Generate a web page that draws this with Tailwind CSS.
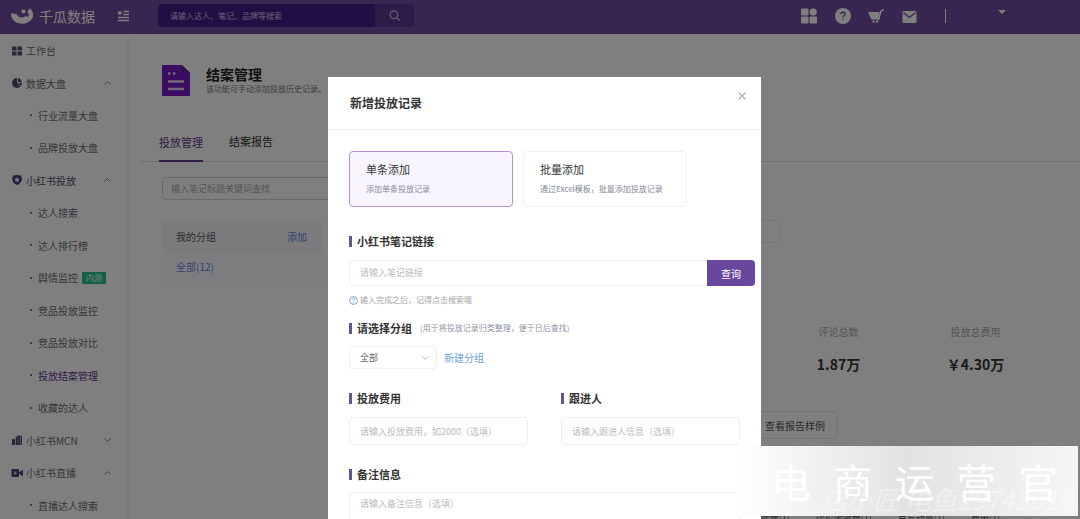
<!DOCTYPE html>
<html lang="zh-CN">
<head>
<meta charset="utf-8">
<title>千瓜数据 - 结案管理</title>
<script src="https://cdn.jsdelivr.net/npm/@tailwindcss/browser@4"></script>
</head>
<body class="bg-white font-['Noto_Sans_CJK_SC',sans-serif] text-[#333]">
<div class="flex h-screen flex-col overflow-hidden">
  <header class="flex h-[34px] shrink-0 items-center bg-[#704aa0] pb-[3px] pl-[11px] text-white">
    <svg class="h-[22px] w-[22px] shrink-0" viewBox="0 0 22 22"><path d="M2 9.500C4 17 14 19.500 19.500 12C20.500 10 20 7 17.500 5" fill="none" stroke="currentColor" stroke-width="4.500"/><path d="M0 8L5.500 9C7 12.500 11 13.500 15 11L19 14C14 20 3 20 0 8Z" fill="currentColor"/><circle cx="12.500" cy="6.500" r="2" fill="currentColor"/></svg>
    <span class="ml-1.5 w-[70px] text-sm leading-5">千瓜数据</span>
    <button aria-label="收起菜单" class="ml-2"><svg class="h-3 w-3" viewBox="0 0 12 12" fill="none" stroke="currentColor" stroke-width="1.300"><path d="M6.500 1.500H12M6.500 4.500H12M1 7.500H12M1 10.500H12"/><path d="M1 3H4.500" stroke-width="3"/></svg></button>
    <form class="ml-[29px] flex h-[23px] w-[256px] overflow-hidden rounded-sm">
      <input aria-label="搜索" class="min-w-0 flex-1 bg-[#441c8a] pl-3 text-[8px] placeholder:text-[#cfc4e4]" placeholder="请输入达人、笔记、品牌等搜索">
      <button type="button" aria-label="搜索" class="flex w-[39px] items-center justify-center bg-[#5a3890]"><svg class="h-[11px] w-[11px]" viewBox="0 0 12 12" fill="none" stroke="#cdbfe0" stroke-width="1.400"><circle cx="5.300" cy="5.300" r="4.200"/><path d="M8.500 8.500L11.500 11.500"/></svg></button>
    </form>
    <nav class="ml-auto flex items-center pr-[74px]">
      <a href="#" aria-label="应用"><svg class="h-4 w-4" viewBox="0 0 16 16" fill="currentColor"><rect x="0" y="0.500" width="7.500" height="7" rx="1"/><circle cx="12.200" cy="4" r="3.600"/><rect x="0" y="8.500" width="7.500" height="7" rx="1"/><rect x="8.500" y="8.500" width="7.500" height="7" rx="1"/></svg></a>
      <a href="#" aria-label="帮助" class="ml-[18px]"><svg class="h-4 w-4" viewBox="0 0 16 16"><circle cx="8" cy="8" r="8" fill="currentColor"/><path d="M5.800 6.200C5.800 3.500 10.300 3.700 10.300 6 10.300 7.500 8 7.700 8 9.200M8 10.500V12" fill="none" stroke="#704aa0" stroke-width="1.300"/></svg></a>
      <a href="#" aria-label="购物车" class="ml-[17px]"><svg class="h-4 w-4" viewBox="0 0 16 16" fill="currentColor"><path d="M0 4H11.500L10.200 11.500H3.200Z"/><path d="M10.500 12L13 3L15.800 1.300" fill="none" stroke="currentColor" stroke-width="1.500"/><circle cx="5.500" cy="13.500" r="1.200"/><circle cx="9" cy="13.500" r="1.200"/></svg></a>
      <a href="#" aria-label="消息" class="ml-[18px]"><svg class="h-4 w-[15px]" viewBox="0 0 15 16"><rect x=".5" y="3" width="14" height="12" rx="1" fill="currentColor"/><path d="M1.500 4.500L7.500 9.500L13.500 4.500" fill="none" stroke="#704aa0" stroke-width="1.300"/></svg></a>
      <span class="ml-7 h-3.5 w-px bg-white"></span>
      <button aria-label="账户菜单" class="mb-2 ml-[52px]"><svg class="h-1 w-2" viewBox="0 0 8 4"><path d="M0 0H8L4 4Z" fill="currentColor"/></svg></button>
    </nav>
  </header>
  <div class="flex min-h-0 flex-1">
    <aside class="w-[128px] shrink-0 overflow-hidden border-r border-[#f2f2f6] text-[10px] text-[#6c6c74] shadow-sm">
      <a href="#" class="flex h-[33px] items-center pl-3"><svg class="mr-1 h-2.5 w-2.5" viewBox="0 0 10 10" fill="#53536b"><path d="M0 .5H4.500V4.500H0ZM5.500 .5H10V4.500H5.500ZM0 5.500H4.500V9.500H0ZM5.500 5.500H10V9.500H5.500Z"/></svg>工作台</a>
      <button class="flex h-8 w-full items-center pr-4 pl-3"><svg class="mr-1 h-2.5 w-2.5" viewBox="0 0 10 10"><circle cx="5" cy="5" r="5" fill="#53536b"/><path d="M5.500 0V4.500H10M5.500 4.500L8.500 8.500" fill="none" stroke="#fff" stroke-width=".8"/></svg>数据大盘<svg class="ml-auto h-1 w-[7px]" viewBox="0 0 7 4" fill="none" stroke="#888"><path d="M.5 3.500L3.500.5L6.500 3.500"/></svg></button>
      <a href="#" class="flex h-8 items-center pl-[30px]"><i class="mr-1.5 h-0.5 w-0.5 rounded-full bg-[#555]"></i>行业流量大盘</a>
      <a href="#" class="flex h-[33px] items-center pl-[30px]"><i class="mr-1.5 h-0.5 w-0.5 rounded-full bg-[#555]"></i>品牌投放大盘</a>
      <button class="flex h-8 w-full items-center pr-4 pl-3 text-[#554d66]"><svg class="mr-1 h-2.5 w-2.5" viewBox="0 0 10 10"><path d="M1 .5Q5-.5 9 .5L10 4Q9.500 8 5 10Q.5 8 0 4Z" fill="#4d3d80"/><path d="M5 2L5.800 3.800L7.800 4L6.300 5.200L6.700 7.100L5 6.200L3.300 7.100L3.700 5.200L2.200 4L4.200 3.800Z" fill="#fff"/></svg>小红书投放<svg class="ml-auto h-1 w-[7px]" viewBox="0 0 7 4" fill="none" stroke="#888"><path d="M.5 3.500L3.500.5L6.500 3.500"/></svg></button>
      <a href="#" class="flex h-[33px] items-center pl-[30px]"><i class="mr-1.5 h-0.5 w-0.5 rounded-full bg-[#555]"></i>达人搜索</a>
      <a href="#" class="flex h-8 items-center pl-[30px]"><i class="mr-1.5 h-0.5 w-0.5 rounded-full bg-[#555]"></i>达人排行榜</a>
      <a href="#" class="flex h-[33px] items-center pl-[30px]"><i class="mr-1.5 h-0.5 w-0.5 rounded-full bg-[#555]"></i>舆情监控<span class="ml-1 flex h-3 w-6 items-center justify-center bg-[#20c486] text-[8px] text-white">内测</span></a>
      <a href="#" class="flex h-8 items-center pl-[30px]"><i class="mr-1.5 h-0.5 w-0.5 rounded-full bg-[#555]"></i>竞品投放监控</a>
      <a href="#" class="flex h-[33px] items-center pl-[30px]"><i class="mr-1.5 h-0.5 w-0.5 rounded-full bg-[#555]"></i>竞品投放对比</a>
      <a href="#" class="flex h-8 items-center pl-[30px] text-[#5b3792]"><i class="mr-1.5 h-0.5 w-0.5 rounded-full bg-[#5b3792]"></i>投放结案管理</a>
      <a href="#" class="flex h-[33px] items-center pl-[30px]"><i class="mr-1.5 h-0.5 w-0.5 rounded-full bg-[#555]"></i>收藏的达人</a>
      <button class="flex h-8 w-full items-center pr-4 pl-3"><svg class="mr-1 h-2.5 w-2.5" viewBox="0 0 10 10"><path d="M0 4H3V10H0ZM3.700 2L8 0V10H3.700ZM8.500 1H10V10H8.500Z" fill="#4b5575"/><path d="M5 3.500H7M5 5.500H7M5 7.500H7" stroke="#aaa" stroke-width=".7"/></svg>小红书MCN<svg class="ml-auto h-1 w-[7px]" viewBox="0 0 7 4" fill="none" stroke="#888"><path d="M.5.5L3.500 3.500L6.500.5"/></svg></button>
      <button class="flex h-[33px] w-full items-center pr-4 pl-3"><svg class="mr-1 h-2.5 w-2.5 overflow-visible" viewBox="0 0 10 10"><rect x="-.5" y="1" width="7.500" height="8" rx="1" fill="#3e4d74"/><path d="M7 4.500L11 1.500V8.500L7 5.500Z" fill="#3e4d74"/><path d="M2.300 3L5 5L2.300 7Z" fill="#ddd"/></svg>小红书直播<svg class="ml-auto h-1 w-[7px]" viewBox="0 0 7 4" fill="none" stroke="#888"><path d="M.5 3.500L3.500.5L6.500 3.500"/></svg></button>
      <a href="#" class="flex h-8 items-center pl-[30px]"><i class="mr-1.5 h-0.5 w-0.5 rounded-full bg-[#555]"></i>直播达人搜索</a>
    </aside>
    <main class="min-w-0 flex-1 overflow-hidden pt-[31px] pl-3">
      <div class="flex items-center pl-[22px]">
        <svg class="h-[31px] w-7 shrink-0" viewBox="0 0 28 31"><path d="M0 0H20L28 8V31H0Z" fill="#721cc0"/><path d="M20 0V8H28Z" fill="#5a2690"/><path d="M6 16.500H22M6 24H22" stroke="#e5d0f5" stroke-width="2.500"/><path d="M6 8.500H8.500M11 8.500H13.500" stroke="#e5d0f5" stroke-width="2.500"/></svg>
        <div class="ml-4 whitespace-nowrap">
          <h1 class="text-sm leading-4 font-bold text-[#222]">结案管理</h1>
          <p class="text-[8px] leading-[14px] text-[#777]">该功能可手动添加投放历史记录。</p>
        </div>
      </div>
      <div role="tablist" class="mt-7 flex h-[38px] gap-[26px] border-b border-[#dcdce4] pl-[19px] text-[11px]">
        <button role="tab" aria-selected="true" class="-mb-px border-b-2 border-[#5c3a8e] text-[#5c3a8e]">投放管理</button>
        <button role="tab" class="pb-0.5">结案报告</button>
      </div>
      <div class="mt-[15px] ml-[22px] flex">
        <input aria-label="输入笔记标题关键词查找" class="h-[23px] w-[320px] rounded-sm border border-[#d4d4d8] px-2 text-[9px] placeholder:text-[#aaa]" placeholder="输入笔记标题关键词查找">
      </div>
      <div class="mt-5 flex">
        <section class="ml-[22px] h-[66px] w-[160px] shrink-0 bg-[#fafaff] text-[10px]">
          <div class="flex h-8 items-center justify-between bg-[#f7f7fc] pr-[15px] pl-3.5 text-[#555]"><span>我的分组</span><a href="#" class="text-[#6789da]">添加</a></div>
          <a href="#" class="flex h-7 items-center pl-3.5 text-[#6789da]">全部(12)</a>
        </section>
        <section class="min-w-0 flex-1">
          <div class="ml-10 h-[23px] w-[418px] rounded-sm border border-[#ebebee]"></div>
          <div class="mt-[81px] mr-9 flex justify-end text-center">
            <div class="w-[137px]"><p class="text-[10px] leading-4 text-[#aaa]">评论总数</p><p class="mt-3.5 text-sm leading-5 font-bold text-[#333]">1.87万</p></div>
            <div class="w-[137px]"><p class="text-[10px] leading-4 text-[#aaa]">投放总费用</p><p class="mt-3.5 text-sm leading-5 font-bold text-[#333]">￥4.30万</p></div>
          </div>
          <div class="mt-[37px] mr-[242px] flex justify-end"><button class="h-7 rounded-sm border border-[#e8e8e8] px-3 text-[10px] text-[#555]">查看报告样例</button></div>
          <div class="mt-[74px] mr-20 flex justify-end gap-[26px] text-[9px] leading-3 text-[#555]"><span>点赞数(1)</span><span>评论收藏数(1)</span><span>总互动量(1)</span><span>费用(1)</span></div>
        </section>
      </div>
    </main>
  </div>
</div>

<div class="fixed inset-0 flex items-start justify-center overflow-hidden bg-black/50 pt-[77px] pl-[9px]">
  <div role="dialog" aria-modal="true" aria-labelledby="dialog-title" class="w-[433px] bg-white pb-10">
    <div class="flex h-[53px] items-center justify-between border-b border-[#eee] pr-[14px] pl-[22px]">
      <h2 id="dialog-title" class="text-xs font-bold">新增投放记录</h2>
      <button aria-label="关闭" class="mb-3.5"><svg class="h-2.5 w-2.5" viewBox="0 0 10 10" stroke="#aaa" stroke-width="1.100"><path d="M1.500 1.500L8.500 8.500M8.500 1.500L1.500 8.500"/></svg></button>
    </div>
    <form class="px-[21px] pt-[21px]">
      <div class="flex gap-2.5">
        <button type="button" class="h-14 w-[164px] rounded-sm border border-[#b58fd0] bg-[#f9f5ff] pl-4 text-left"><span class="block text-[11px] leading-4">单条添加</span><span class="mt-1 block text-[8px] leading-4 text-[#858a97]">添加单条投放记录</span></button>
        <button type="button" class="h-14 w-[164px] rounded-sm border border-[#f0f0f0] pl-4 text-left"><span class="block text-[11px] leading-4">批量添加</span><span class="mt-1 block text-[8px] leading-4 whitespace-nowrap text-[#858a97]">通过Excel模板，批量添加投放记录</span></button>
      </div>
      <label for="note-link" class="mt-[26px] flex h-4 items-center text-[11px] font-bold"><i class="mr-[5px] h-[11px] w-[3px] bg-[#66529a]"></i>小红书笔记链接</label>
      <div class="mt-[11px] -mr-[15px] flex h-[26px]">
        <input id="note-link" class="min-w-0 flex-1 rounded-l-sm border border-r-0 border-[#eee] px-2.5 text-[9px] placeholder:text-[#bbb]" placeholder="请输入笔记链接">
        <button type="button" class="w-12 rounded-r-sm bg-[#69479f] text-[10px] text-white">查询</button>
      </div>
      <p class="mt-1.5 flex h-4 items-center text-[8px] text-[#a4a4a8]"><svg class="mr-0.5 h-[9px] w-[9px]" viewBox="0 0 10 10" fill="none" stroke="#739bd0"><circle cx="5" cy="5" r="4.400"/><path d="M3.500 4C3.500 2.200 6.500 2.300 6.500 4 6.500 5 5 5 5 6.200M5 7V8"/></svg>输入完成之后，记得点击搜索哦</p>
      <label for="group" class="mt-3 flex h-4 items-center text-[11px] font-bold"><i class="mr-[5px] h-[11px] w-[3px] bg-[#66529a]"></i>请选择分组<span class="ml-2 text-[8px] font-normal text-[#8f95a5]">(用于将投放记录归类整理，便于日后查找)</span></label>
      <div class="mt-2.5 flex h-[23px] items-center">
        <div class="relative h-full w-[88px]">
          <select id="group" class="block h-full w-full appearance-none rounded-sm border border-[#eee] px-2.5 text-[9px] text-[#666]"><option>全部</option></select>
          <svg class="pointer-events-none absolute top-2.5 right-2 h-1 w-[7px]" viewBox="0 0 7 4" fill="none" stroke="#bbb"><path d="M.5.5L3.500 3.500L6.500.5"/></svg>
        </div>
        <a href="#" class="ml-[7px] text-[10px] text-[#6e9fe2]">新建分组</a>
      </div>
      <div class="mt-[21px] flex gap-[33px]">
        <div class="w-[179px]"><label for="cost" class="flex h-4 items-center text-[11px] font-bold"><i class="mr-[5px] h-[11px] w-[3px] bg-[#66529a]"></i>投放费用</label><input id="cost" class="mt-[11px] block h-7 w-full rounded-sm border border-[#eee] px-2.5 text-[9px] placeholder:text-[#bbb]" placeholder="请输入投放费用，如2000（选填）"></div>
        <div class="w-[179px]"><label for="owner" class="flex h-4 items-center text-[11px] font-bold"><i class="mr-[5px] h-[11px] w-[3px] bg-[#66529a]"></i>跟进人</label><input id="owner" class="mt-[11px] block h-7 w-full rounded-sm border border-[#eee] px-2.5 text-[9px] placeholder:text-[#bbb]" placeholder="请输入跟进人信息（选填）"></div>
      </div>
      <label for="remark" class="mt-[21px] flex h-4 items-center text-[11px] font-bold"><i class="mr-[5px] h-[11px] w-[3px] bg-[#66529a]"></i>备注信息</label>
      <textarea id="remark" rows="3" class="mt-2.5 block w-full resize-none rounded-sm border border-[#eee] px-2.5 py-1 text-[9px] placeholder:text-[#bbb]" placeholder="请输入备注信息（选填）"></textarea>
    </form>
  </div>
</div>

<div class="fixed right-0.5 bottom-[3px] flex h-[70px] w-[343px] items-center justify-between overflow-hidden bg-linear-to-r from-white via-[#e2e2e2] to-[#f6f6f6] pr-5 pl-9 text-[40px] leading-none text-white">
  <span class="absolute right-1.5 bottom-1 text-[26px] whitespace-nowrap text-white/40 italic">店小匠 电鱼29743019</span>
  <span class="relative">电</span><span class="relative">商</span><span class="relative">运</span><span class="relative">营</span><span class="relative">官</span>
</div>
</body>
</html>
